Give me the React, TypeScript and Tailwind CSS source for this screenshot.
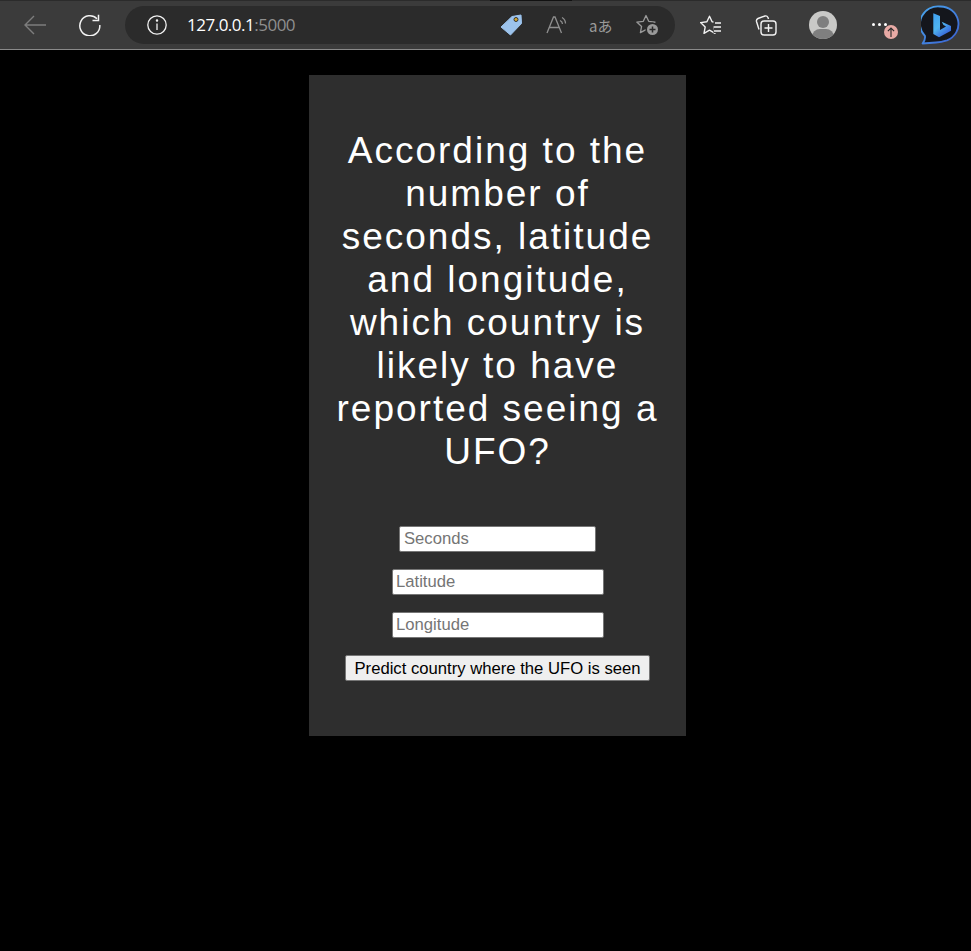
import React from "react";

const Toolbar = () => {
  return (
    <div className="h-[50px] bg-[#3b3b3b] border-t border-t-[#2b2b2b] border-b border-b-[#8a8a8a] flex items-center relative">
      <div className="absolute top-[-1px] left-[490px] w-[82px] h-px bg-[#111111]"></div>
      {/* back */}
      <svg className="ml-[24px]" width="22" height="20" viewBox="0 0 22 20" fill="none" stroke="#7d7d7d" strokeWidth="1.4">
        <path d="M1 10H22M10 1L1 10l9 9" />
      </svg>
      {/* refresh */}
      <svg className="ml-[33px]" width="22" height="22" viewBox="0 0 22 22" fill="none" stroke="#f2f2f2" strokeWidth="1.5">
        <path d="M18 4.8A10 10 0 1 0 20.8 11" />
        <path d="M13.5 6.5H19.5V0.8" />
      </svg>
      {/* address bar */}
      <div className="ml-[24px] w-[550px] h-[38px] rounded-full bg-[#2b2b2b] flex items-center shrink-0">
        <svg className="ml-[22px]" width="20" height="20" viewBox="0 0 20 20" fill="none" stroke="#f2f2f2" strokeWidth="1.3">
          <circle cx="10" cy="10" r="9.2" />
          <path d="M10 8.5V15" />
          <circle cx="10" cy="5.6" r="0.6" fill="#f2f2f2" />
        </svg>
        <span className="ml-[20px] text-[17px] tracking-[-0.5px] text-white font-['Open_Sans',sans-serif]">
          127.0.0.1<span className="text-[#8f8f8f]">:5000</span>
        </span>
        <svg className="ml-[205px]" width="22" height="22" viewBox="0 0 22 22">
          <path d="M1 13L12 2.5 21 1l0.5 8.5L10.500 21z" fill="#9cc3ec" stroke="#9cc3ec" strokeLinejoin="round" />
          <circle cx="16" cy="5.500" r="2" fill="#d4a72c" stroke="#333333" />
        </svg>
        <svg className="ml-[24px]" width="22" height="18" viewBox="0 0 22 18" fill="none" stroke="#8f8f8f" strokeWidth="1.3">
          <path d="M1 17L7.500 1h1.500L15.500 17M3.500 11.500h9.500" />
          <path d="M14 4.500a4 4 0 0 1 2.500 3.500M16 1.500a7 7 0 0 1 3.500 6" />
        </svg>
        <span className="ml-[21px] text-[15px] leading-none text-[#9a9a9a] font-['Noto_Sans_CJK_JP',sans-serif]">aあ</span>
        <svg className="ml-[23px]" width="23" height="22" viewBox="0 0 23 22" fill="none" stroke="#9a9a9a" strokeWidth="1.3">
          <path d="M10 1.500l2.700 5.800 6.300 0.800-4.600 4.300 1.200 6.200-5.600-3-5.600 3 1.200-6.200L0.800 8.100l6.500-0.800z" strokeLinejoin="round" />
          <circle cx="16.500" cy="15.500" r="7" fill="#2b2b2b" stroke="none" />
          <circle cx="16.500" cy="15.500" r="5.500" fill="#9a9a9a" stroke="none" />
          <path d="M16.500 12.500v6M13.500 15.500h6" stroke="#2b2b2b" strokeWidth="1.500" />
        </svg>
      </div>
      {/* favorites */}
      <svg className="ml-[25px]" width="22" height="20" viewBox="0 0 22 20" fill="none" stroke="#f2f2f2" strokeWidth="1.400">
        <path d="M9.500 1.200l2.600 5.600 6.300 0.800-4.600 4.300 1.200 6.400-5.500-3.100-5.500 3.100 1.200-6.400L0.600 7.600l6.300-0.800z" strokeLinejoin="round" />
        <rect x="13.500" y="6" width="8.500" height="12" fill="#3b3b3b" stroke="none" />
        <path d="M15 8h6M14 12h7M14 16h7" />
      </svg>
      {/* collections */}
      <svg className="ml-[33px]" width="22" height="22" viewBox="0 0 22 22" fill="none" stroke="#f2f2f2" strokeWidth="1.400">
        <path d="M4 15.500L1.500 7.500Q1 5.500 3 4.500l7-2.500q2-0.500 3 1.500l0.500 1.500" />
        <rect x="6" y="7" width="15" height="14" rx="3" />
        <path d="M13.500 10v8M9.500 14h8" />
      </svg>
      {/* profile */}
      <div className="ml-[32px] w-[28px] h-[28px] rounded-full bg-[#c9c9c7] overflow-hidden relative shrink-0">
        <div className="absolute left-[8px] top-[5px] w-[12px] h-[12px] rounded-full bg-[#7f7f7f]"></div>
        <div className="absolute left-[3px] top-[18px] w-[22px] h-[16px] rounded-full bg-[#7f7f7f]"></div>
      </div>
      {/* menu */}
      <div className="ml-[35px] w-[36px] h-[30px] relative shrink-0">
        <div className="absolute left-0 top-[13px] flex gap-[3px]">
          <div className="w-[3px] h-[3px] rounded-full bg-white"></div>
          <div className="w-[3px] h-[3px] rounded-full bg-white"></div>
          <div className="w-[3px] h-[3px] rounded-full bg-white"></div>
        </div>
        <div className="absolute left-[12px] top-[15px] w-[14px] h-[14px] rounded-full bg-[#e8aaa5] flex items-center justify-center">
          <svg width="8" height="10" viewBox="0 0 9 11" fill="none" stroke="#2b2b2b" strokeWidth="1.300">
            <path d="M4.500 11V1M1 4.500L4.500 1 8 4.500" />
          </svg>
        </div>
      </div>
      {/* bing */}
      <svg className="ml-[13px] shrink-0" width="40" height="40" viewBox="0 0 40 40">
        <defs>
          <linearGradient id="bingRing" x1="0" y1="0" x2="1" y2="1">
            <stop offset="0" stopColor="#4aa8ee" />
            <stop offset="1" stopColor="#3a5fd0" />
          </linearGradient>
          <linearGradient id="bingB" x1="0" y1="0" x2="0.600" y2="1">
            <stop offset="0" stopColor="#3f9ff0" />
            <stop offset="0.550" stopColor="#4fb4ee" />
            <stop offset="1" stopColor="#3560d8" />
          </linearGradient>
        </defs>
        <path d="M19 1.500a18 17.500 0 0 1 7 33.800q-6 2-11 2.200L1.500 38.500Q4.500 35 4 31A18 17.500 0 0 1 19 1.500z" fill="#14161c" stroke="url(#bingRing)" strokeWidth="1.800" strokeLinejoin="round" />
        <path d="M12.300 8.300L19 11V25L25 21.500L22.500 20L20.700 16.700L30 21V25.700L18 32.300L12.300 29Z" fill="url(#bingB)" />
      </svg>
    </div>
  );
};

const App = () => {
  return (
    <div className="min-h-[951px] bg-black font-['Liberation_Sans',sans-serif]">
      <Toolbar />
      <div className="w-[377px] mt-[25px] ml-[309px] bg-[#2e2e2e] pt-[54px] pb-[55px] px-[20px] flex flex-col items-center">
        <h1 className="text-[37px] leading-[43px] tracking-[2px] text-white text-center font-normal">
          According to the number of seconds, latitude and longitude, which country is likely to have reported seeing a UFO?
        </h1>
        <form className="mt-[53px] flex flex-col items-center gap-[17px]">
          <input
            className="w-[197px] h-[26px] bg-white border border-[#767676] rounded-[2px] px-[4px] text-[16.67px] placeholder:text-[#757575]"
            placeholder="Seconds"
          />
          <input
            className="w-[212px] h-[26px] bg-white border border-[#767676] rounded-[2px] pl-[3.5px] pr-[3px] text-[16.67px] placeholder:text-[#757575]"
            placeholder="Latitude"
          />
          <input
            className="w-[212px] h-[26px] bg-white border border-[#767676] rounded-[2px] pl-[3.5px] pr-[3px] text-[16.67px] placeholder:text-[#757575]"
            placeholder="Longitude"
          />
          <button
            type="button"
            className="w-[305px] h-[26px] bg-[#efefef] border border-[#767676] rounded-[2px] pb-[2px] text-[16.67px] text-black"
          >
            Predict country where the UFO is seen
          </button>
        </form>
      </div>
    </div>
  );
};

export default App;
